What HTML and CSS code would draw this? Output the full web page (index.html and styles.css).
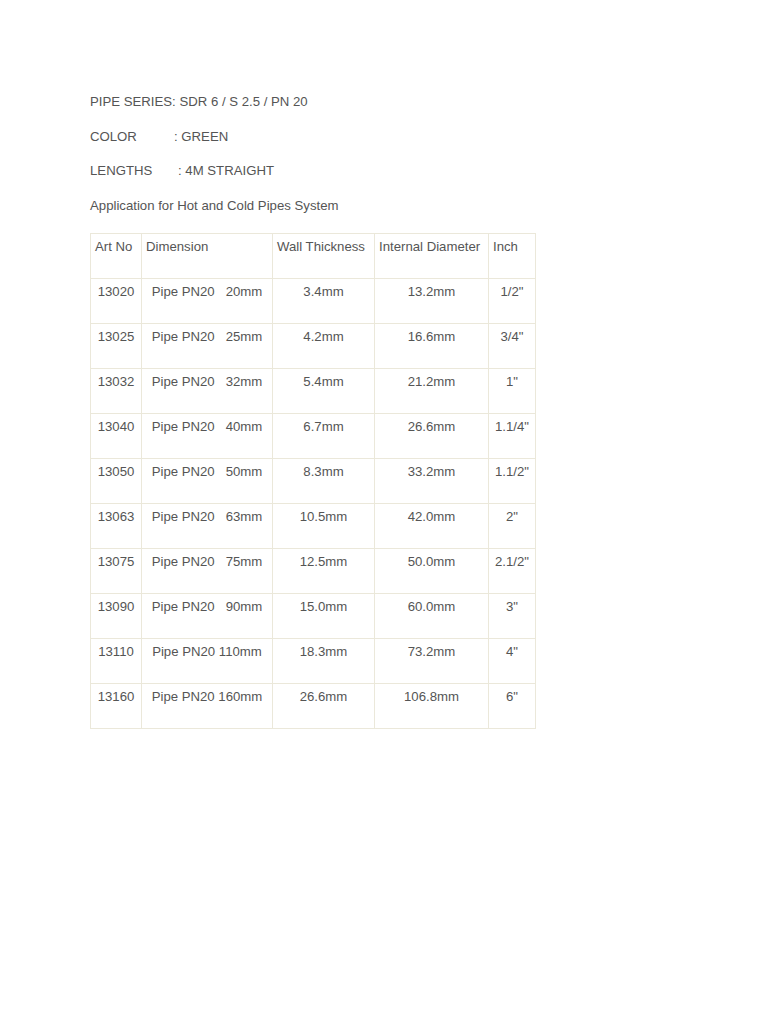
FILE: index.html
```html
<!DOCTYPE html>
<html>
<head>
<meta charset="utf-8">
<link rel="stylesheet" href="styles.css">
</head>
<body>
<div class="page">
<p class="line">PIPE SERIES: SDR 6 / S 2.5 / PN 20</p>
<p class="line"><span class="label color-label">COLOR</span>: GREEN</p>
<p class="line"><span class="label length-label">LENGTHS</span>: 4M STRAIGHT</p>
<p class="line">Application for Hot and Cold Pipes System</p>
<table class="spec">
<colgroup>
<col class="c1"><col class="c2"><col class="c3"><col class="c4"><col class="c5">
</colgroup>
<thead>
<tr><th>Art No</th><th>Dimension</th><th>Wall Thickness</th><th>Internal Diameter</th><th>Inch</th></tr>
</thead>
<tbody>
<tr><td>13020</td><td>Pipe PN20&nbsp;&nbsp; 20mm</td><td>3.4mm</td><td>13.2mm</td><td>1/2"</td></tr>
<tr><td>13025</td><td>Pipe PN20&nbsp;&nbsp; 25mm</td><td>4.2mm</td><td>16.6mm</td><td>3/4"</td></tr>
<tr><td>13032</td><td>Pipe PN20&nbsp;&nbsp; 32mm</td><td>5.4mm</td><td>21.2mm</td><td>1"</td></tr>
<tr><td>13040</td><td>Pipe PN20&nbsp;&nbsp; 40mm</td><td>6.7mm</td><td>26.6mm</td><td>1.1/4"</td></tr>
<tr><td>13050</td><td>Pipe PN20&nbsp;&nbsp; 50mm</td><td>8.3mm</td><td>33.2mm</td><td>1.1/2"</td></tr>
<tr><td>13063</td><td>Pipe PN20&nbsp;&nbsp; 63mm</td><td>10.5mm</td><td>42.0mm</td><td>2"</td></tr>
<tr><td>13075</td><td>Pipe PN20&nbsp;&nbsp; 75mm</td><td>12.5mm</td><td>50.0mm</td><td>2.1/2"</td></tr>
<tr><td>13090</td><td>Pipe PN20&nbsp;&nbsp; 90mm</td><td>15.0mm</td><td>60.0mm</td><td>3"</td></tr>
<tr><td>13110</td><td>Pipe PN20 110mm</td><td>18.3mm</td><td>73.2mm</td><td>4"</td></tr>
<tr><td>13160</td><td>Pipe PN20 160mm</td><td>26.6mm</td><td>106.8mm</td><td>6"</td></tr>
</tbody>
</table>
</div>
</body>
</html>
```
FILE: styles.css
```css
html, body {
  margin: 0;
  padding: 0;
  background: #ffffff;
}
.page {
  padding: 94px 0 0 90px;
  font-family: "Liberation Sans", Arial, sans-serif;
  font-size: 13.2px;
  line-height: 15px;
  color: #555555;
}
.line {
  margin: 0 0 19.67px 0;
}
.label {
  display: inline-block;
}
.color-label {
  width: 84px;
}
.length-label {
  width: 88px;
}
.spec {
  border-collapse: collapse;
  table-layout: fixed;
  width: 446px;
}
.c1 { width: 51px; }
.c2 { width: 131px; }
.c3 { width: 102px; }
.c4 { width: 114px; }
.c5 { width: 47px; }
.spec th, .spec td {
  border: 1px solid #ebe8da;
  height: 34px;
  padding: 5px 4px 5px 4px;
  vertical-align: top;
  font-weight: normal;
  white-space: nowrap;
}
.spec th {
  text-align: left;
}
.spec td {
  text-align: center;
}
```
